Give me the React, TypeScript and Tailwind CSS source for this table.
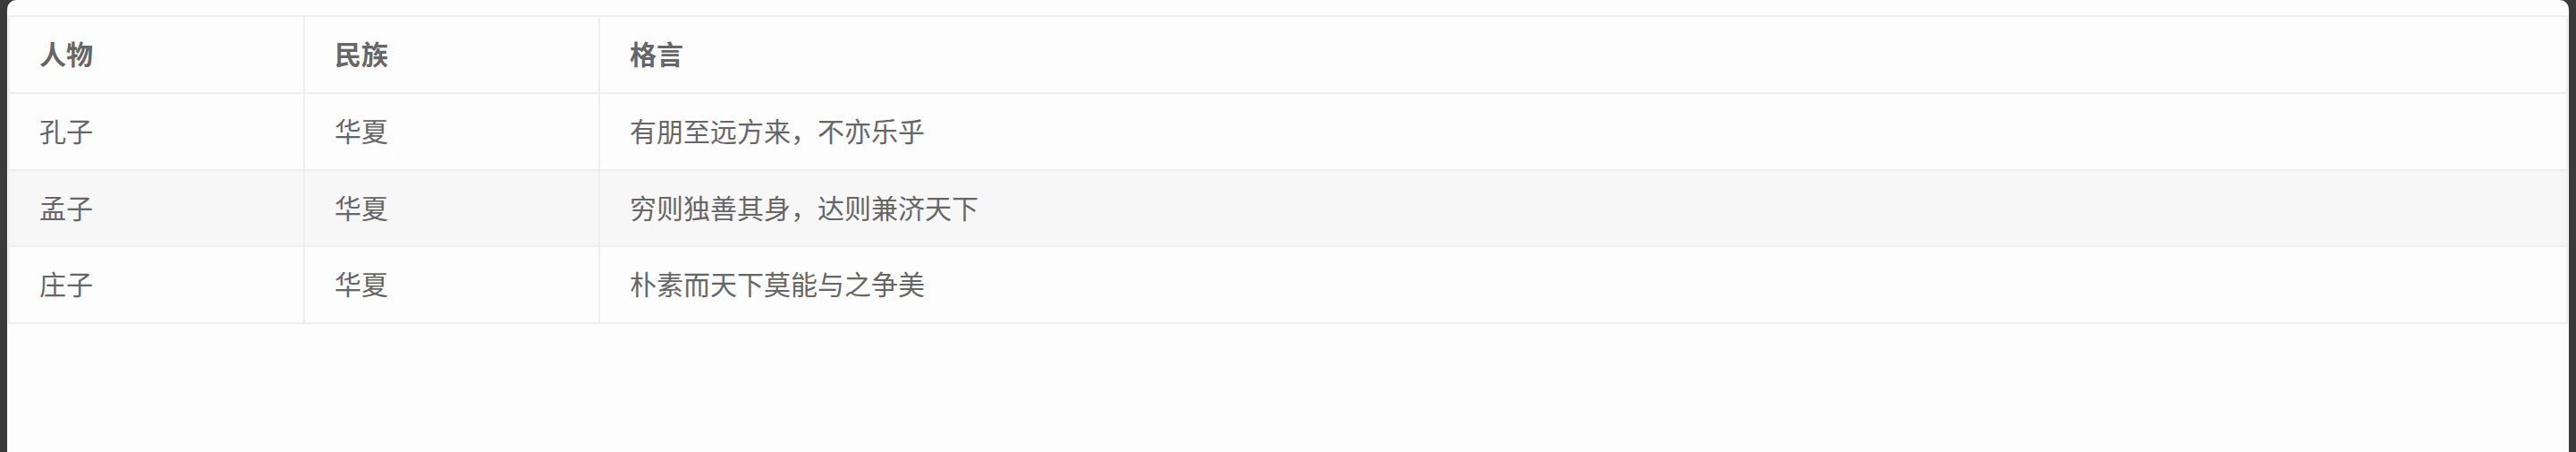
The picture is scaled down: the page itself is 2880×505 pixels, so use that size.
import React from 'react';

const rows = [
  { name: '孔子', nation: '华夏', motto: '有朋至远方来，不亦乐乎' },
  { name: '孟子', nation: '华夏', motto: '穷则独善其身，达则兼济天下' },
  { name: '庄子', nation: '华夏', motto: '朴素而天下莫能与之争美' },
];

// 2px borders, row pitch ~86px like the screenshot
const cell = 'border-2 border-[#eeeeee] px-[33px] pt-[20px] pb-[23.75px] text-left leading-[40px] text-[30px]';

export default function App() {
  return (
    <div
      className="h-[505px] bg-[#3a3a3a] px-2"
      style={{ fontFamily: '"Microsoft YaHei", "Noto Sans CJK SC", "Noto Sans", sans-serif' }}
    >
      <div className="h-full rounded-t-[10px] bg-[#fdfdfd] px-px pt-[17px]">
        <table className="w-full border-collapse text-[#666666]">
          <thead>
            <tr>
              <th className={`${cell} w-[330px] font-bold`}>人物</th>
              <th className={`${cell} w-[330px] font-bold`}>民族</th>
              <th className={`${cell} font-bold`}>格言</th>
            </tr>
          </thead>
          <tbody>
            {rows.map((r, i) => (
              <tr key={r.name} className={i % 2 === 1 ? 'bg-[#f7f7f7]' : ''}>
                <td className={`${cell} font-normal`}>{r.name}</td>
                <td className={`${cell} font-normal`}>{r.nation}</td>
                <td className={`${cell} font-normal`}>{r.motto}</td>
              </tr>
            ))}
          </tbody>
        </table>
      </div>
    </div>
  );
}
